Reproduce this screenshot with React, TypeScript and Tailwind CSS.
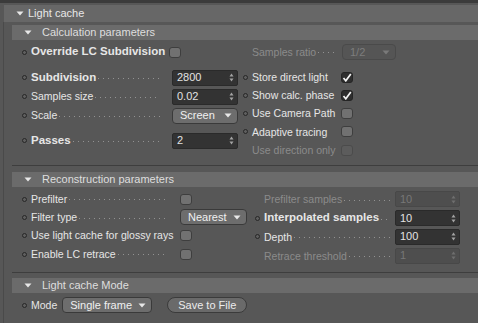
// Panneau "Light cache" — attributs de rendu, style éditeur sombre

import type { ReactNode } from 'react';

const FONT = "font-['Liberation_Sans',Arial,sans-serif]";

function Dot({ hidden }: { hidden?: boolean }) {
  return (
    <span
      className={`w-[5px] h-[5px] shrink-0 rounded-full border ${
        hidden ? 'border-transparent' : 'border-[#262626] bg-[#5f5f5f]'
      }`}
    />
  );
}

function Leader() {
  return (
    <span className="flex-1 ml-[2px] h-px self-end mb-[4px] bg-[linear-gradient(to_right,#929292_1px,transparent_1px)] bg-[length:5px_1px] bg-repeat-x" />
  );
}

interface LabelProps {
  text: string;
  bold?: boolean;
  disabled?: boolean;
  leader?: boolean;
  className?: string;
}

function Label({ text, bold, disabled, leader = true, className = '' }: LabelProps) {
  return (
    <span className={`flex items-center min-w-0 ${className}`}>
      <span
        className={`whitespace-nowrap leading-none ${bold ? 'font-bold text-[11.5px]' : ''} ${
          disabled ? 'text-[#8b8b8b]' : 'text-[#e6e6e6]'
        }`}
      >
        {text}
      </span>
      {leader && <Leader />}
    </span>
  );
}

function Spinner({ disabled }: { disabled?: boolean }) {
  const c = disabled ? '#6f6f6f' : '#a4a4a4';
  return (
    <svg width="5" height="9" viewBox="0 0 5 9" className="shrink-0">
      <path d="M0.5 3.5 L2.5 0.5 L4.5 3.5 Z" fill={c} />
      <path d="M0.5 5.5 L2.5 8.5 L4.5 5.5 Z" fill={c} />
    </svg>
  );
}

function NumField({ value, disabled, w = 'w-[66px]' }: { value: string; disabled?: boolean; w?: string }) {
  return (
    <div
      className={`${w} h-[16px] shrink-0 flex items-center pl-[4px] pr-[3px] rounded-[2px] border ${
        disabled ? 'bg-[#4e4e4e] border-[#484848] text-[#777777]' : 'bg-[#333333] border-[#2a2a2a] text-[#e2e2e2]'
      }`}
    >
      <span className="flex-1 text-[11px] leading-none">{value}</span>
      <Spinner disabled={disabled} />
    </div>
  );
}

function Arrow({ disabled }: { disabled?: boolean }) {
  return (
    <svg width="8" height="5" viewBox="0 0 8 5" className="shrink-0">
      <path d="M0.5 0.5 L7.5 0.5 L4 4.5 Z" fill={disabled ? '#7a7a7a' : '#e8e8e8'} />
    </svg>
  );
}

function Dropdown({ value, disabled, w }: { value: string; disabled?: boolean; w: string }) {
  return (
    <div
      className={`${w} h-[16px] shrink-0 flex items-center pl-[7px] pr-[5px] rounded-[4px] border ${
        disabled ? 'bg-[#555555] border-[#4a4a4a] text-[#7d7d7d]' : 'bg-[#6d6d6d] border-[#3a3a3a] text-[#f0f0f0]'
      }`}
    >
      <span className="flex-1 text-[11px] leading-none whitespace-nowrap">{value}</span>
      <Arrow disabled={disabled} />
    </div>
  );
}

function Check({ checked, disabled }: { checked?: boolean; disabled?: boolean }) {
  return (
    <span
      className={`w-[12px] h-[11px] shrink-0 rounded-[3px] border flex items-center justify-center ${
        checked
          ? 'bg-[#2e2e2e] border-[#252525]'
          : disabled
          ? 'bg-[#5c5c5c] border-[#4b4b4b]'
          : 'bg-[#717171] border-[#3e3e3e]'
      }`}
    >
      {checked && (
        <svg width="10" height="9" viewBox="0 0 10 9">
          <path d="M1.5 5 L3.8 7.8 L8.8 1" stroke="#f4f4f4" strokeWidth="1.7" fill="none" />
        </svg>
      )}
    </span>
  );
}

function SectionHeader({ title }: { title: string }) {
  return (
    <div className="h-[15px] bg-[#6b6b6b] flex items-center pl-[12px] gap-[10px] text-[#dedede] text-[11px]">
      <Arrow />
      <span className="leading-none">{title}</span>
    </div>
  );
}

function Separator() {
  return <div className="h-px bg-[#3e3e3e]" />;
}

// Ligne de la colonne de gauche : point, libellé, pointillés, contrôle
function LeftRow({ h, children, label, className = '' }: { h: string; children: ReactNode; label: LabelProps; className?: string }) {
  return (
    <div className={`${h} flex items-center gap-[4px] ${className}`}>
      <Dot hidden={label.disabled} />
      <Label {...label} className="flex-1" />
      {children}
    </div>
  );
}

export default function App() {
  return (
    <div className={`w-[478px] h-[323px] bg-[#575757] overflow-hidden flex flex-col text-[10.5px] ${FONT}`}>
      <div className="h-[3px] bg-[#3b3b3b]" />
      <div className="flex-1 flex flex-col pt-[2px]">
        <div className="ml-[4px] h-[17px] bg-[#676767] flex items-center pl-[12px] gap-[4px] text-[#e8e8e8] text-[11px]">
          <Arrow />
          <span className="leading-none">Light cache</span>
        </div>

        <div className="flex-1 ml-[3px] border-l border-[#4a4a4a] pl-[8px] pt-[3px] flex flex-col">
          {/* Calculation parameters */}
          <SectionHeader title="Calculation parameters" />
          <div className="h-[125px] flex flex-col">
            <div className="mt-[3px] h-[18px] flex items-center">
              <div className="w-[229px] pl-[10px] pr-[3px] flex items-center gap-[4px]">
                <Dot />
                <Label text="Override LC Subdivision" bold leader={false} />
                <Check />
              </div>
              <div className="pl-[2px] flex items-center gap-[4px]">
                <Dot hidden />
                <Label text="Samples ratio" disabled className="w-[86px]" />
                <Dropdown value="1/2" disabled w="w-[54px]" />
              </div>
            </div>

            <div className="mt-[7px] flex">
              <div className="w-[229px] pl-[10px] pr-[3px] flex flex-col">
                <LeftRow h="h-[19px]" label={{ text: 'Subdivision', bold: true }}>
                  <span className="w-[4px]" />
                  <NumField value="2800" />
                </LeftRow>
                <LeftRow h="h-[19px]" label={{ text: 'Samples size' }}>
                  <span className="w-[4px]" />
                  <NumField value="0.02" />
                </LeftRow>
                <LeftRow h="h-[19px]" label={{ text: 'Scale' }}>
                  <span className="w-[4px]" />
                  <Dropdown value="Screen" w="w-[66px]" />
                </LeftRow>
                <LeftRow h="h-[19px]" className="mt-[6px]" label={{ text: 'Passes', bold: true }}>
                  <span className="w-[4px]" />
                  <NumField value="2" />
                </LeftRow>
              </div>
              <div className="pl-[2px] flex flex-col">
                {[
                  { t: 'Store direct light', c: true },
                  { t: 'Show calc. phase', c: true },
                  { t: 'Use Camera Path' },
                  { t: 'Adaptive tracing' },
                  { t: 'Use direction only', d: true },
                ].map((r) => (
                  <div key={r.t} className="h-[18.25px] flex items-center gap-[4px]">
                    <Dot hidden={r.d} />
                    <Label text={r.t} disabled={r.d} leader={false} className="w-[85px]" />
                    <Check checked={r.c} disabled={r.d} />
                  </div>
                ))}
              </div>
            </div>
          </div>
          <Separator />

          {/* Reconstruction parameters */}
          <div className="mt-[6px]">
            <SectionHeader title="Reconstruction parameters" />
          </div>
          <div className="h-[85px] pt-[3px] flex">
            <div className="w-[235px] pl-[10px] flex flex-col">
              <LeftRow h="h-[18.3px]" label={{ text: 'Prefilter' }}>
                <span className="w-[4px]" />
                <div className="w-[67px]">
                  <Check />
                </div>
              </LeftRow>
              <LeftRow h="h-[18.3px]" label={{ text: 'Filter type' }}>
                <span className="w-[4px]" />
                <Dropdown value="Nearest" w="w-[67px]" />
              </LeftRow>
              <LeftRow h="h-[18.3px]" label={{ text: 'Use light cache for glossy rays', leader: false }}>
                <span className="w-[4px]" />
                <div className="w-[67px]">
                  <Check />
                </div>
              </LeftRow>
              <LeftRow h="h-[18.3px]" label={{ text: 'Enable LC retrace' }}>
                <span className="w-[4px]" />
                <div className="w-[67px]">
                  <Check />
                </div>
              </LeftRow>
            </div>
            <div className="w-[213px] pl-[8px] flex flex-col">
              <LeftRow h="h-[18.8px]" label={{ text: 'Prefilter samples', disabled: true }}>
                <NumField value="10" disabled w="w-[65px]" />
              </LeftRow>
              <LeftRow h="h-[18.8px]" label={{ text: 'Interpolated samples', bold: true }}>
                <NumField value="10" w="w-[65px]" />
              </LeftRow>
              <LeftRow h="h-[18.8px]" label={{ text: 'Depth' }}>
                <NumField value="100" w="w-[65px]" />
              </LeftRow>
              <LeftRow h="h-[18.8px]" label={{ text: 'Retrace threshold', disabled: true }}>
                <NumField value="1" disabled w="w-[65px]" />
              </LeftRow>
            </div>
          </div>
          <Separator />

          {/* Light cache Mode */}
          <div className="mt-[5px]">
            <SectionHeader title="Light cache Mode" />
          </div>
          <div className="mt-[4px] h-[16px] pl-[10px] flex items-center">
            <Dot />
            <span className="ml-[4px] text-[#e6e6e6] leading-none">Mode</span>
            <div className="ml-[5px]">
              <Dropdown value="Single frame" w="w-[90px]" />
            </div>
            <button className="ml-[15px] w-[80px] h-[16px] rounded-[8px] border border-[#3b3b3b] bg-[#6a6a6a] text-[#ececec] text-[11px] leading-none">
              Save to File
            </button>
          </div>
        </div>
      </div>
    </div>
  );
}
